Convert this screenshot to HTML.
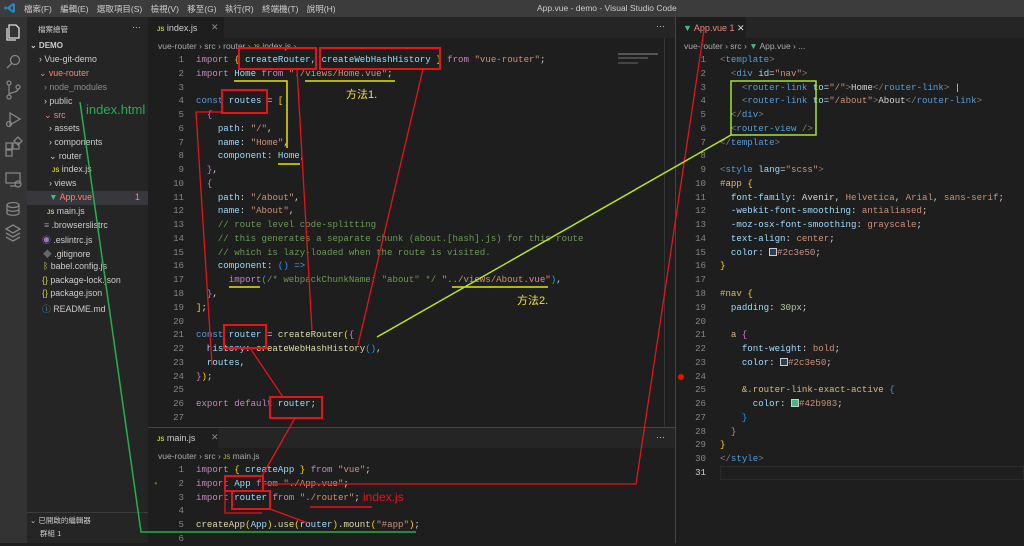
<!DOCTYPE html>
<html><head><meta charset="utf-8"><style>
*{margin:0;padding:0;box-sizing:border-box}
body{width:1024px;height:543px;overflow:hidden;background:#1e1e1e;font-family:"Liberation Sans","Noto Sans CJK TC",sans-serif;color:#ccc;position:relative}
.abs{position:absolute}
.t{position:absolute;white-space:nowrap}
pre{font-family:"Liberation Mono",monospace;font-size:9.1px;line-height:13.77px;white-space:pre;position:absolute}
.ln{color:#858585;text-align:right}
.k{color:#c586c0}.v{color:#9cdcfe}.s{color:#ce9178}.f{color:#dcdcaa}.c{color:#6a9955}.b{color:#569cd6}.y{color:#ffd700}.p{color:#da70d6}.q{color:#179fff}.w{color:#d4d4d4}.g{color:#808080}.n{color:#b5cea8}.tg{color:#569cd6}.at{color:#9cdcfe}.sel{color:#d7ba7d}
.side div{position:absolute;font-size:8.8px;white-space:nowrap;color:#ccc}
</style></head><body>
<div class="abs" style="left:0;top:0;width:1024px;height:17px;background:#3c3c3c"></div>
<svg class="abs" style="left:4px;top:2px" width="12" height="12" viewBox="0 0 12 12"><path d="M9 1 L11 2 V10 L9 11 L3 6.5 L1 8 L0.5 7.5 V4.5 L1 4 L3 5.5 Z M9 3.5 L6 6 L9 8.5Z" fill="#2489ca"/></svg>
<div class="t" style="left:24px;top:3px;font-size:8.5px;color:#ccc;word-spacing:6px">檔案(F) 編輯(E) 選取項目(S) 檢視(V) 移至(G) 執行(R) 終端機(T) 說明(H)</div>
<div class="t" style="left:537px;top:3px;font-size:8.5px;color:#ccc">App.vue - demo - Visual Studio Code</div>
<div class="abs" style="left:0;top:17px;width:27px;height:526px;background:#333"></div>
<svg class="abs" style="left:0;top:17px" width="27" height="240" viewBox="0 0 27 240" fill="none" stroke="#858585" stroke-width="1.3">
<path d="M9 8h7l3 3v10h-10z M7 11v12h9" stroke="#ddd"/>
<circle cx="15" cy="43" r="4.5"/><path d="M12 46l-5 5"/>
<circle cx="9" cy="66" r="2"/><circle cx="9" cy="80" r="2"/><circle cx="18" cy="70" r="2"/><path d="M9 68v10 M18 72c0 4-9 3-9 6"/>
<path d="M10 96l10 6-10 6z"/><circle cx="9" cy="107" r="2.5"/>
<path d="M6 126h6v6h-6z M13 126h6v6h-6z M6 133h6v6h-6z M14 124l4-4 4 4-4 4z"/>
<path d="M6 156h14v10h-14z M10 169h6"/><circle cx="18" cy="167" r="3"/>
<ellipse cx="13" cy="188" rx="6" ry="2.5"/><path d="M7 188v8c0 3 12 3 12 0v-8 M7 192c0 3 12 3 12 0"/>
<path d="M6 212l7-4 7 4-7 4z M6 216l7 4 7-4 M6 220l7 4 7-4"/>
</svg>
<div class="abs" style="left:27px;top:17px;width:121px;height:526px;background:#252526"></div>
<div class="abs" style="left:27px;top:191px;width:121px;height:14px;background:#37373d"></div>
<div class="abs" style="left:27px;top:512px;width:121px;height:1px;background:#3c3c3c"></div>
<div class="side">
<div style="left:38px;top:24px;font-size:7.5px">檔案總管</div>
<div style="left:132px;top:22px">···</div>
<div style="left:30px;top:41px;font-size:8px;font-weight:bold">⌄ DEMO</div>
<div style="left:39px;top:54px">› Vue-git-demo</div>
<div style="left:39px;top:68px;color:#f48771">⌄ vue-router</div>
<div style="left:44px;top:82px;color:#8b8b8b">› node_modules</div>
<div style="left:44px;top:96px">› public</div>
<div style="left:44px;top:110px;color:#f48771">⌄ src</div>
<div style="left:49px;top:123px">› assets</div>
<div style="left:49px;top:137px">› components</div>
<div style="left:49px;top:151px">⌄ router</div>
<div style="left:52px;top:164px"><span style="color:#cbcb41;font-size:6px;font-weight:bold">JS</span> index.js</div>
<div style="left:49px;top:178px">› views</div>
<div style="left:49px;top:192px;color:#f48771"><span style="color:#41b883">▼</span> App.vue</div>
<div style="left:135px;top:192px;color:#f48771">1</div>
<div style="left:47px;top:206px"><span style="color:#cbcb41;font-size:6px;font-weight:bold">JS</span> main.js</div>
<div style="left:44px;top:220px"><span style="color:#999">≡</span> .browserslistrc</div>
<div style="left:42px;top:233px"><span style="color:#a074c4">◉</span> .eslintrc.js</div>
<div style="left:43px;top:247px"><span style="color:#666">◆</span> .gitignore</div>
<div style="left:43px;top:261px"><span style="color:#cbcb41">ᛒ</span> babel.config.js</div>
<div style="left:42px;top:275px"><span style="color:#cbcb41">{}</span> package-lock.json</div>
<div style="left:42px;top:288px"><span style="color:#cbcb41">{}</span> package.json</div>
<div style="left:42px;top:302px"><span style="color:#519aba">ⓘ</span> README.md</div>
<div style="left:30px;top:515px;font-size:7.5px">⌄ 已開啟的編輯器</div>
<div style="left:40px;top:528px;font-size:7.5px">群組 1</div>
</div>
<div class="abs" style="left:148px;top:17px;width:527px;height:21px;background:#252526"></div>
<div class="abs" style="left:148px;top:17px;width:76px;height:21px;background:#1e1e1e"></div>
<div class="t" style="left:157px;top:23px;font-size:9px"><span style="color:#cbcb41;font-size:6px;font-weight:bold">JS</span> index.js</div>
<div class="t" style="left:211px;top:22px;font-size:9px;color:#888">✕</div>
<div class="t" style="left:656px;top:21px;font-size:9px">···</div>
<div class="t" style="left:158px;top:41px;font-size:8.5px;color:#aaa">vue-router › src › router › <span style="color:#cbcb41;font-size:6px">JS</span> index.js ›</div>
<pre class="ln" style="left:150px;top:53px;width:34px">1
2
3
4
5
6
7
8
9
10
11
12
13
14
15
16
17
18
19
20
21
22
23
24
25
26
27</pre>
<pre style="left:196px;top:53px"><span class="k">import</span> <span class="y">{</span> <span class="v">createRouter</span>, <span class="v">createWebHashHistory</span> <span class="y">}</span> <span class="k">from</span> <span class="s">"vue-router"</span><span class="w">;</span>
<span class="k">import</span> <span class="v">Home</span> <span class="k">from</span> <span class="s">"./views/Home.vue"</span><span class="w">;</span>

<span class="b">const</span> <span class="v">routes</span> <span class="w">=</span> <span class="y">[</span>
  <span class="p">{</span>
    <span class="v">path</span><span class="w">:</span> <span class="s">"/"</span><span class="w">,</span>
    <span class="v">name</span><span class="w">:</span> <span class="s">"Home"</span><span class="w">,</span>
    <span class="v">component</span><span class="w">:</span> <span class="v">Home</span><span class="w">,</span>
  <span class="p">}</span><span class="w">,</span>
  <span class="p">{</span>
    <span class="v">path</span><span class="w">:</span> <span class="s">"/about"</span><span class="w">,</span>
    <span class="v">name</span><span class="w">:</span> <span class="s">"About"</span><span class="w">,</span>
    <span class="c">// route level code-splitting</span>
    <span class="c">// this generates a separate chunk (about.[hash].js) for this route</span>
    <span class="c">// which is lazy-loaded when the route is visited.</span>
    <span class="v">component</span><span class="w">:</span> <span class="q">()</span> <span class="b">=&gt;</span>
      <span class="k">import</span><span class="q">(</span><span class="c">/* webpackChunkName: "about" */</span> <span class="s">"../views/About.vue"</span><span class="q">)</span><span class="w">,</span>
  <span class="p">}</span><span class="w">,</span>
<span class="y">]</span><span class="w">;</span>

<span class="b">const</span> <span class="v">router</span> <span class="w">=</span> <span class="f">createRouter</span><span class="y">(</span><span class="p">{</span>
  <span class="v">history</span><span class="w">:</span> <span class="f">createWebHashHistory</span><span class="q">()</span><span class="w">,</span>
  <span class="v">routes</span><span class="w">,</span>
<span class="p">}</span><span class="y">)</span><span class="w">;</span>

<span class="k">export</span> <span class="k">default</span> <span class="v">router</span><span class="w">;</span>
</pre>
<div class="abs" style="left:618px;top:53px;width:40px;height:2px;background:#555"></div>
<div class="abs" style="left:618px;top:57px;width:30px;height:2px;background:#4a4a4a"></div>
<div class="abs" style="left:618px;top:62px;width:20px;height:2px;background:#444"></div>
<div class="abs" style="left:664px;top:38px;width:1px;height:390px;background:#333"></div>
<div class="abs" style="left:148px;top:427px;width:527px;height:1px;background:#444"></div>
<div class="abs" style="left:148px;top:428px;width:527px;height:20px;background:#252526"></div>
<div class="abs" style="left:148px;top:428px;width:70px;height:20px;background:#1e1e1e"></div>
<div class="t" style="left:157px;top:433px;font-size:9px"><span style="color:#cbcb41;font-size:6px;font-weight:bold">JS</span> main.js</div>
<div class="t" style="left:211px;top:432px;font-size:9px;color:#888">✕</div>
<div class="t" style="left:656px;top:432px;font-size:9px">···</div>
<div class="t" style="left:158px;top:451px;font-size:8.5px;color:#aaa">vue-router › src › <span style="color:#cbcb41;font-size:6px">JS</span> main.js</div>
<pre class="ln" style="left:150px;top:463px;width:34px">1
2
3
4
5
6</pre>
<div class="t" style="left:154px;top:481px;font-size:6px;color:#487e02">●</div>
<pre style="left:196px;top:463px"><span class="k">import</span> <span class="y">{</span> <span class="v">createApp</span> <span class="y">}</span> <span class="k">from</span> <span class="s">"vue"</span><span class="w">;</span>
<span class="k">import</span> <span class="v">App</span> <span class="k">from</span> <span class="s">"./App.vue"</span><span class="w">;</span>
<span class="k">import</span> <span class="v">router</span> <span class="k">from</span> <span class="s">"./router"</span><span class="w">;</span>

<span class="f">createApp</span><span class="y">(</span><span class="v">App</span><span class="y">)</span><span class="w">.</span><span class="f">use</span><span class="y">(</span><span class="v">router</span><span class="y">)</span><span class="w">.</span><span class="f">mount</span><span class="y">(</span><span class="s">"#app"</span><span class="y">)</span><span class="w">;</span>
</pre>
<div class="abs" style="left:675px;top:17px;width:1px;height:526px;background:#444"></div>
<div class="abs" style="left:676px;top:17px;width:348px;height:21px;background:#252526"></div>
<div class="abs" style="left:676px;top:17px;width:70px;height:21px;background:#1e1e1e"></div>
<div class="t" style="left:683px;top:23px;font-size:9px;color:#f48771"><span style="color:#41b883">▼</span> App.vue 1 <span style="color:#ddd">✕</span></div>
<div class="t" style="left:684px;top:41px;font-size:8.5px;color:#aaa">vue-router › src › <span style="color:#41b883">▼</span> App.vue › ...</div>
<pre class="ln" style="left:677px;top:53px;width:29px">1
2
3
4
5
6
7
8
9
10
11
12
13
14
15
16
17
18
19
20
21
22
23
24
25
26
27
28
29
30
<span style="color:#ccc">31</span></pre>
<div class="abs" style="left:720px;top:466px;width:304px;height:14px;border:1px solid #2a2a2a"></div>
<div class="abs" style="left:678px;top:374px;width:6px;height:6px;border-radius:50%;background:#e51400"></div>
<pre style="left:720px;top:53px"><span class="g">&lt;</span><span class="tg">template</span><span class="g">&gt;</span>
  <span class="g">&lt;</span><span class="tg">div</span> <span class="at">id</span><span class="w">=</span><span class="s">"nav"</span><span class="g">&gt;</span>
    <span class="g">&lt;</span><span class="tg">router-link</span> <span class="at">to</span><span class="w">=</span><span class="s">"/"</span><span class="g">&gt;</span><span class="w">Home</span><span class="g">&lt;/</span><span class="tg">router-link</span><span class="g">&gt;</span> <span class="w">|</span>
    <span class="g">&lt;</span><span class="tg">router-link</span> <span class="at">to</span><span class="w">=</span><span class="s">"/about"</span><span class="g">&gt;</span><span class="w">About</span><span class="g">&lt;/</span><span class="tg">router-link</span><span class="g">&gt;</span>
  <span class="g">&lt;/</span><span class="tg">div</span><span class="g">&gt;</span>
  <span class="g">&lt;</span><span class="tg">router-view</span> <span class="g">/&gt;</span>
<span class="g">&lt;/</span><span class="tg">template</span><span class="g">&gt;</span>

<span class="g">&lt;</span><span class="tg">style</span> <span class="at">lang</span><span class="w">=</span><span class="s">"scss"</span><span class="g">&gt;</span>
<span class="sel">#app</span> <span class="y">{</span>
  <span class="v">font-family</span><span class="w">:</span> <span class="w">Avenir</span><span class="w">,</span> <span class="s">Helvetica</span><span class="w">,</span> <span class="s">Arial</span><span class="w">,</span> <span class="s">sans-serif</span><span class="w">;</span>
  <span class="v">-webkit-font-smoothing</span><span class="w">:</span> <span class="s">antialiased</span><span class="w">;</span>
  <span class="v">-moz-osx-font-smoothing</span><span class="w">:</span> <span class="s">grayscale</span><span class="w">;</span>
  <span class="v">text-align</span><span class="w">:</span> <span class="s">center</span><span class="w">;</span>
  <span class="v">color</span><span class="w">:</span> <span style="display:inline-block;width:8px;height:8px;border:1px solid #ccc;background:#2c3e50;vertical-align:-1px"></span><span class="s">#2c3e50</span><span class="w">;</span>
<span class="y">}</span>

<span class="sel">#nav</span> <span class="y">{</span>
  <span class="v">padding</span><span class="w">:</span> <span class="n">30px</span><span class="w">;</span>

  <span class="sel">a</span> <span class="p">{</span>
    <span class="v">font-weight</span><span class="w">:</span> <span class="s">bold</span><span class="w">;</span>
    <span class="v">color</span><span class="w">:</span> <span style="display:inline-block;width:8px;height:8px;border:1px solid #ccc;background:#2c3e50;vertical-align:-1px"></span><span class="s">#2c3e50</span><span class="w">;</span>

    <span class="sel">&amp;.router-link-exact-active</span> <span class="q">{</span>
      <span class="v">color</span><span class="w">:</span> <span style="display:inline-block;width:8px;height:8px;border:1px solid #ccc;background:#42b983;vertical-align:-1px"></span><span class="s">#42b983</span><span class="w">;</span>
    <span class="q">}</span>
  <span class="p">}</span>
<span class="y">}</span>
<span class="g">&lt;/</span><span class="tg">style</span><span class="g">&gt;</span>
</pre>
<svg class="abs" style="left:0;top:0" width="1024" height="543" fill="none">
<g stroke="#e8121a" stroke-width="2">
<rect x="239" y="48" width="77" height="21"/>
<rect x="320" y="48" width="120" height="21"/>
<rect x="222" y="90" width="45" height="23"/>
<rect x="224" y="325" width="42" height="23"/>
<rect x="270" y="397" width="52" height="21"/>
<rect x="225" y="476" width="38" height="15"/>
<rect x="232" y="491" width="38" height="18"/>
</g>
<g stroke="#e8121a" stroke-width="1.3">
<path d="M222 112 H196 L212 365"/>
<path d="M297 69 L312 330"/>
<path d="M423 69 L358 345"/>
<path d="M250 348 L283 397"/>
<path d="M295 418 L262 476"/>
<path d="M263 484 H636 L704 30"/>
<path d="M225 491 V513 H262"/>
<path d="M270 509 L308 523"/>
<path d="M310 507 H372" stroke-width="1.5"/>
</g>
<g stroke="#e6e600" stroke-width="1.5">
<path d="M234 81 H287 V148"/>
<path d="M305 81 H395"/>
<path d="M278 164 H300"/>
<path d="M229 287 H260"/>
<path d="M452 287 H548"/>
</g>
<rect x="731" y="81" width="85" height="54" stroke="#a6e22e" stroke-width="1.5"/>
<path d="M731 135 L377 337" stroke="#b5e61d" stroke-width="1.5"/>
<path d="M80 102 L141 532 H416" stroke="#22b14c" stroke-width="1.5"/>
</svg>
<div class="t" style="left:346px;top:86px;font-size:11px;color:#f0e040">方法1.</div>
<div class="t" style="left:517px;top:292px;font-size:11px;color:#f0e040">方法2.</div>
<div class="t" style="left:86px;top:102px;font-size:13px;color:#22b14c">index.html</div>
<div class="t" style="left:363px;top:490px;font-size:12px;color:#e8121a">index.js</div>
</body></html>
